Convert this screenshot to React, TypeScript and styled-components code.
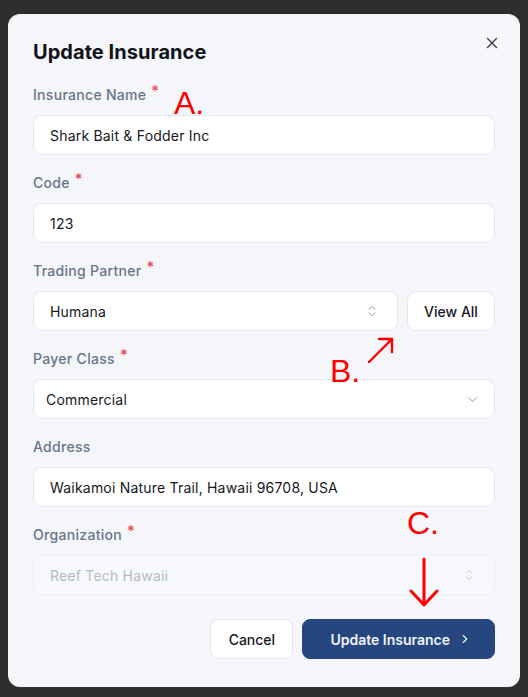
import React from "react";
import styled, { createGlobalStyle } from "styled-components";
import { X, ChevronsUpDown, ChevronDown, ChevronRight } from "lucide-react";

const Global = createGlobalStyle`
  html, body { margin: 0; padding: 0; }
  body {
    background: #2e2e2e;
    font-family: Inter, "Open Sans", "Liberation Sans", sans-serif;
    -webkit-font-smoothing: antialiased;
  }
`;

const Screen = styled.div`
  width: 528px;
  height: 697px;
  padding: 14px 8px 10px;
  box-sizing: border-box;
`;

const Dialog = styled.div`
  position: relative;
  width: 512px;
  height: 673px;
  box-sizing: border-box;
  background: #f4f6fa;
  border-radius: 12px;
  padding: 24px 25px 28px;
  display: flex;
  flex-direction: column;
`;

const Header = styled.div`
  display: flex;
  justify-content: space-between;
  align-items: flex-start;
  margin-bottom: 19px;
`;

const Title = styled.h2`
  margin: 0;
  font-size: 20px;
  line-height: 28px;
  font-weight: 700;
  color: #111318;
  letter-spacing: 0.05px;
`;

const CloseBtn = styled.button`
  border: none;
  background: none;
  padding: 0;
  margin: -4px -6px 0 0;
  color: #3a3d44;
  display: flex;
  cursor: pointer;
`;

const Fields = styled.div`
  display: flex;
  flex-direction: column;
  gap: 18px;
`;

const Field = styled.div`
  display: flex;
  flex-direction: column;
  gap: 10px;
`;

const Label = styled.label`
  font-size: 14px;
  line-height: 20px;
  font-weight: 500;
  color: #687489;
  letter-spacing: 0.3px;
  display: flex;
  align-items: flex-start;
`;

const Req = styled.span`
  color: #e5484d;
  font-size: 15px;
  line-height: 14px;
  margin-left: 5px;
  margin-top: -1px;
`;

const Box = styled.div<{ $pad?: number; $disabled?: boolean }>`
  height: 40px;
  box-sizing: border-box;
  border: 1px solid ${(p) => (p.$disabled ? "#eceff4" : "#e2e6ee")};
  background: ${(p) => (p.$disabled ? "#f8f9fc" : "#ffffff")};
  border-radius: 9px;
  padding: 0 ${(p) => (p.$pad ?? 16) - 4}px 0 ${(p) => p.$pad ?? 16}px;
  display: flex;
  align-items: center;
  justify-content: space-between;
  font-size: 14px;
  letter-spacing: 0.2px;
  color: ${(p) => (p.$disabled ? "#b3b9c4" : "#16181d")};
  flex: 1 0 auto;
`;

const Row = styled.div`
  display: flex;
  gap: 9px;
`;

const Icon = styled.span<{ $muted?: boolean }>`
  display: flex;
  color: ${(p) => (p.$muted ? "#c4c9d2" : "#8a8f98")};
  margin-right: 6px;
`;

const SideButton = styled.button`
  width: 88px;
  height: 40px;
  flex: none;
  box-sizing: border-box;
  background: #fff;
  border: 1px solid #e2e6ee;
  border-radius: 9px;
  font-family: inherit;
  font-size: 14px;
  font-weight: 500;
  color: #16181d;
`;

const Footer = styled.div`
  margin-top: auto;
  display: flex;
  justify-content: flex-end;
  gap: 9px;
`;

const Button = styled.button<{ $primary?: boolean }>`
  height: 40px;
  box-sizing: border-box;
  border-radius: 8px;
  font-family: inherit;
  font-size: 14px;
  font-weight: ${(p) => (p.$primary ? 600 : 500)};
  white-space: nowrap;
  display: flex;
  align-items: center;
  justify-content: center;
  gap: 8px;
  padding: ${(p) => (p.$primary ? "0 22px 0 27px" : "0 16px")};
  border: 1px solid ${(p) => (p.$primary ? "#25467f" : "#e2e6ee")};
  background: ${(p) => (p.$primary ? "#25467f" : "#ffffff")};
  color: ${(p) => (p.$primary ? "#f1f4fa" : "#16181d")};
  min-width: ${(p) => (p.$primary ? "192px" : "83px")};
`;

const Mark = styled.span<{ $x: number; $y: number }>`
  position: absolute;
  left: ${(p) => p.$x}px;
  top: ${(p) => p.$y}px;
  font-family: "Liberation Sans", Arial, sans-serif;
  font-size: 32px;
  line-height: 32px;
  color: #ff0000;
  pointer-events: none;
`;

const Arrow = styled.svg<{ $x: number; $y: number }>`
  position: absolute;
  left: ${(p) => p.$x}px;
  top: ${(p) => p.$y}px;
  overflow: visible;
  pointer-events: none;
`;

export default function App() {
  return (
    <>
      <Global />
      <Screen>
        <Dialog>
          <Header>
            <Title>Update Insurance</Title>
            <CloseBtn aria-label="Close">
              <X size={18} strokeWidth={1.8} />
            </CloseBtn>
          </Header>
          <Fields>
            <Field>
              <Label>Insurance Name<Req>*</Req></Label>
              <Box>Shark Bait &amp; Fodder Inc</Box>
            </Field>
            <Field>
              <Label>Code<Req>*</Req></Label>
              <Box>123</Box>
            </Field>
            <Field>
              <Label>Trading Partner<Req>*</Req></Label>
              <Row>
                <Box>
                  Humana
                  <Icon><ChevronsUpDown size={14} strokeWidth={1.5} /></Icon>
                </Box>
                <SideButton>View All</SideButton>
              </Row>
            </Field>
            <Field>
              <Label>Payer Class<Req>*</Req></Label>
              <Box $pad={12}>
                Commercial
                <Icon><ChevronDown size={15} strokeWidth={1.5} /></Icon>
              </Box>
            </Field>
            <Field>
              <Label>Address</Label>
              <Box>Waikamoi Nature Trail, Hawaii 96708, USA</Box>
            </Field>
            <Field>
              <Label>Organization<Req>*</Req></Label>
              <Box $disabled>
                Reef Tech Hawaii
                <Icon $muted><ChevronsUpDown size={14} strokeWidth={1.5} /></Icon>
              </Box>
            </Field>
          </Fields>
          <Footer>
            <Button>Cancel</Button>
            <Button $primary>
              Update Insurance
              <ChevronRight size={14} strokeWidth={2} />
            </Button>
          </Footer>

          <Mark $x={166} $y={73}>A.</Mark>
          <Mark $x={322} $y={341}>B.</Mark>
          <Arrow $x={360} $y={323} width="26" height="26" viewBox="0 0 26 26">
            <path d="M1 25 L24 2 M11 2 L24 2 L24 15" fill="none" stroke="#ff0000" strokeWidth="2.4" strokeLinecap="round" strokeLinejoin="round" />
          </Arrow>
          <Mark $x={399} $y={493}>C.</Mark>
          <Arrow $x={401} $y={544} width="32" height="48" viewBox="0 0 32 48">
            <path d="M15 1 L15 47 M2 33 L15 47 L28 33" fill="none" stroke="#ff0000" strokeWidth="3" strokeLinecap="round" strokeLinejoin="round" />
          </Arrow>
        </Dialog>
      </Screen>
    </>
  );
}
